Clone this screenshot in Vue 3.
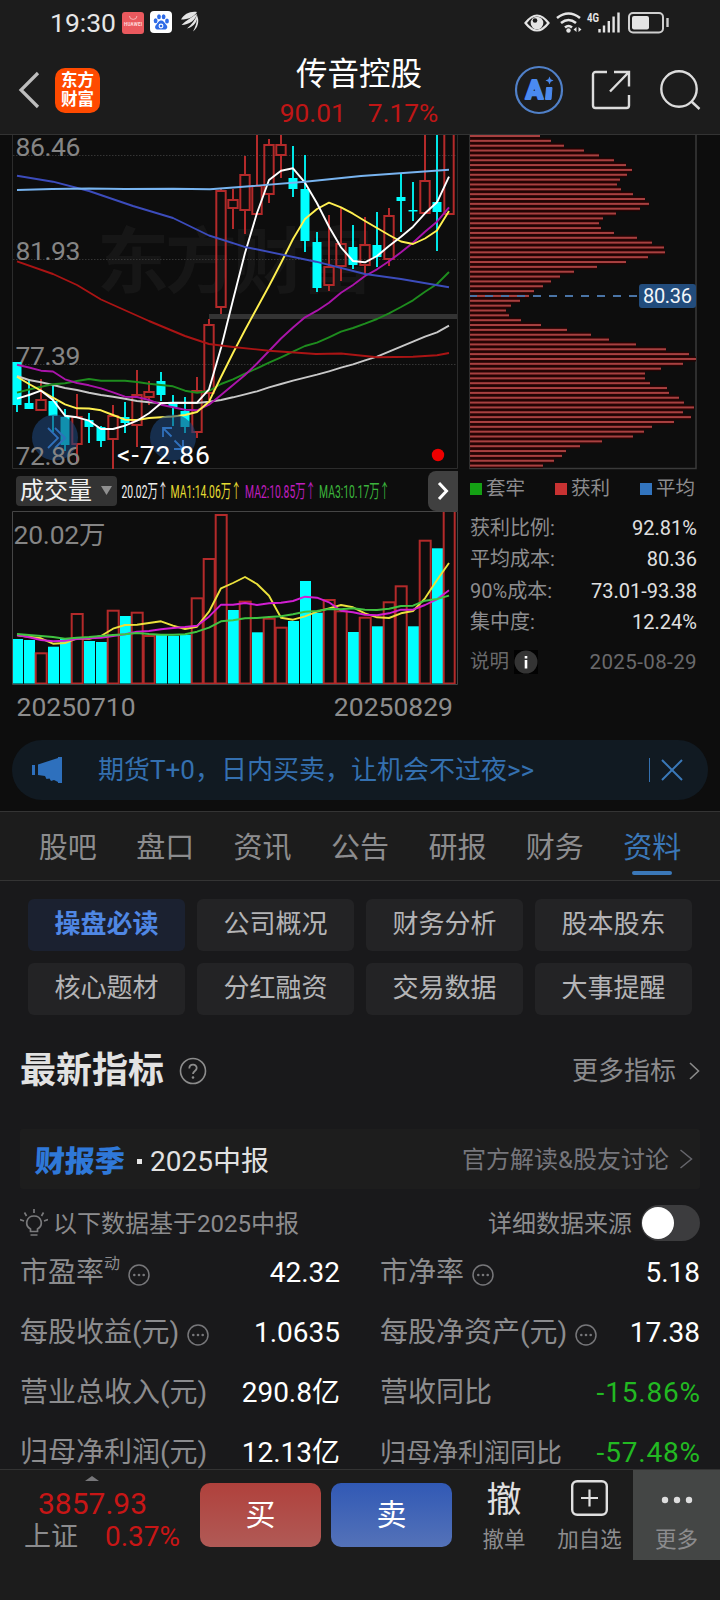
<template>
  <div class="app">
    <div class="status">
      <span class="clock">19:30</span>
      <svg class="st-left" width="78" height="24" viewBox="0 0 78 24">
        <rect x="0" y="1" width="22" height="22" rx="3" fill="#ea595e" />
        <path d="M7.5 5a3.7 3.4 0 0 0 7.4 0" fill="none" stroke="#f7b5b5" />
        <text x="2" y="14.6" font-size="4.6" font-weight="700" fill="#ffdcdc" textLength="18">HUAWEI</text>
        <rect x="28" y="0" width="22" height="22" rx="4" fill="#fff" />
        <g fill="#2f6be6">
          <ellipse cx="33.6" cy="9.8" rx="1.9" ry="2.5" />
          <ellipse cx="37" cy="5.8" rx="1.9" ry="2.5" />
          <ellipse cx="41.6" cy="5.8" rx="1.9" ry="2.5" />
          <ellipse cx="45" cy="10" rx="1.9" ry="2.5" />
          <path d="M39.2 9.5c2.8 0 3.2 2.5 5 4.3 2 2 1 4.8-1.5 4.8h-7c-2.6 0-3.5-2.8-1.5-4.8 1.8-1.8 2.2-4.3 5-4.3z" />
        </g>
        <circle cx="39" cy="15" r="1.9" fill="none" stroke="#fff" stroke-width="1.1" />
        <g fill="#e4e4e4">
          <path d="M59 8.500C62 3 68 0 75 1c-3 5-9 7.500-16 7.500z" />
          <path d="M59.500 14C64 9.500 70 6.500 75 2.500c-1 6.500-8 11.500-15.500 11.500z" />
          <path d="M65 17.500c4.500-4 8-8 10-14 1.500 6-3 12.500-10 14z" />
          <path d="M71 20.500c2.500-4.500 4-9 4.300-15.500 2.200 5 .700 12-4.300 15.500z" />
        </g>
      </svg>
      <svg class="st-right" width="148" height="26" viewBox="0 0 148 26">
        <path d="M1.5 13Q13-2 24.5 13 13 28 1.5 13z" fill="none" stroke="#e4e4e4" stroke-width="2.2" />
        <circle cx="13" cy="13" r="6.3" fill="#e4e4e4" />
        <circle cx="11" cy="10.500" r="2.3" fill="#1c1c1c" />
        <g fill="none" stroke="#e4e4e4" stroke-width="2.6">
          <path d="M33 8q11.500-9 23 0M37 13q7.500-6 15 0M41 17.500q3.500-3 7 0" />
        </g>
        <circle cx="44.5" cy="20.5" r="2.2" fill="#e4e4e4" />
        <path d="M52.500 17v5l-3-2.500zM54.500 17v5l3-2.500z" fill="#e4e4e4" />
        <text x="63" y="11.5" font-size="12" font-weight="700" fill="#e4e4e4" textLength="12" lengthAdjust="spacingAndGlyphs">4G</text>
        <path d="M75.500 19v3.500M80 15.500v7M84.800 11v11.500M89.600 6.500v16M94.500 2.500v20" stroke="#e4e4e4" stroke-width="2.4" />
        <rect x="105" y="3" width="34" height="19.5" rx="4" fill="none" stroke="#cfcfcf" stroke-width="2" />
        <rect x="108" y="6" width="17" height="13.5" rx="2" fill="#e4e4e4" />
        <path d="M143.500 8v9" stroke="#cfcfcf" stroke-width="2.4" />
      </svg>
    </div>

    <header class="header">
      <div class="head-left">
        <svg width="22" height="38" viewBox="0 0 22 38"><path d="M20 2 3 19l17 17" fill="none" stroke="#bdbdbd" stroke-width="3.2" /></svg>
        <div class="logo"><span>东方</span><span>财富</span></div>
      </div>
      <div class="head-mid">
        <div class="title">传音控股</div>
        <div class="quote"><span>90.01</span><span>7.17%</span></div>
      </div>
      <svg class="head-right" width="190" height="50" viewBox="0 0 190 50">
        <circle cx="26" cy="25" r="23" fill="none" stroke="#5080c8" stroke-width="2.2" />
        <text x="12.5" y="34" font-size="26" font-weight="900" fill="#4a8af0" stroke="#4a8af0" stroke-width="1.8" stroke-linejoin="round">A</text>
        <path d="M33.500 22.500h5.500l-1 12h-5.500z" fill="#4a8af0" stroke="#4a8af0" stroke-linejoin="round" />
        <path d="M36.500 11.500l1.200 2.800 2.800 1.200-2.800 1.200-1.200 2.800-1.200-2.800-2.800-1.200 2.800-1.200z" fill="#4a8af0" />
        <g fill="none" stroke="#dcdcdc" stroke-width="2.4">
          <path d="M94 7H82.500a2.500 2.500 0 0 0-2.500 2.500v31a2.500 2.500 0 0 0 2.500 2.500h31a2.500 2.500 0 0 0 2.500-2.500V30M101 7h15v14.500M115.500 7.500 97 26.500" />
          <circle cx="166" cy="24" r="17.7" />
          <path d="m178.500 36.500 8 7.500" />
        </g>
      </svg>
    </header>

    <section class="market">
      <div class="market-cols">
        <div class="col-left">
          <svg class="kline" width="458" height="335" viewBox="0 135 458 335">
            <g class="mark">
              <text x="97" y="287" textLength="276">东方财富</text>
            </g>
            <path d="M12.500 135V468.500H457.500V135" fill="none" stroke="#2c2c2c" />
            <path d="M13 155.500H457M13 259.500H457M13 364.500H457" stroke="#353535" stroke-dasharray="1.5 1.5" />
            <rect x="209" y="314" width="248" height="5" fill="#333" />
            <g class="y-label">
              <text x="15.5" y="156" textLength="65">86.46</text>
              <text x="15.5" y="260" textLength="65">81.93</text>
              <text x="15.5" y="364.5" textLength="65">77.39</text>
            </g>
            <g v-for="(c, i) in candles" :key="i">
              <template v-if="c[0]">
                <path :d="`M${cx(i)} ${c[1]}V${c[3]}M${cx(i)} ${c[4]}V${c[2]}`" stroke="#b32a2a" stroke-width="2" />
                <rect :x="cx(i) - 4.7" :y="c[3]" width="9.4" :height="c[4] - c[3]" fill="none" stroke="#b32a2a" stroke-width="2" />
              </template>
              <template v-else>
                <path :d="`M${cx(i)} ${c[1]}V${c[2]}`" stroke="#00e6e6" stroke-width="2" />
                <rect :x="cx(i) - 4.5" :y="c[3]" width="9" :height="c[4] - c[3]" fill="#00ffff" />
              </template>
            </g>
            <g fill="none" stroke-width="1.9" stroke-linejoin="round">
              <polyline v-for="l in maLines" :key="l.color" :points="pts(l.values)" :stroke="l.color" />
              <polyline points="17,261.3 53,274 77,285 101,299.5 149,321 185,336 209,344 233,347 269,350.7 316,354 341,353.5 377,357.3 413,356.7 437,355.3 449,353" stroke="#aa1414" />
              <polyline points="17,175.7 53,181.7 89,191 133,206 173,218 209,235.5 244,246.7 316,261.7 365,274 401,279 449,287.3" stroke="#3c4cbc" />
              <polyline points="17,190 52,189 89,188.5 125,189 173,188.7 210,189.3 240,187 305,181.7 361,176 449,169.7" stroke="#78b4f0" />
            </g>
            <g fill="#1c4478" fill-opacity=".6">
              <circle cx="55" cy="437.5" r="23" />
              <circle cx="173" cy="437.5" r="23" />
            </g>
            <path d="m48 428 10 10-10 10M55 428l10 10-10 10" fill="none" stroke="#3070bb" stroke-width="1.8" />
            <path d="M163 437v-9h9M163 428l8.500 8.500M183 440v9h-9M183 449l-8.500-8.500" fill="none" stroke="#3070bb" stroke-width="1.8" />
            <text class="y-label" x="15.5" y="465" textLength="65">72.86</text>
            <text class="low" x="117" y="464" textLength="93">&lt;-72.86</text>
            <circle cx="438" cy="455" r="6.2" fill="#ee0000" />
          </svg>

          <div class="vol-bar">
            <div class="vol-select">
              成交量
              <svg width="11" height="9" viewBox="0 0 11 9"><path d="M0 0h11L5.500 9z" fill="#909090" /></svg>
            </div>
            <svg class="vol-ma" width="310" height="30" viewBox="118 475 310 30">
              <text v-for="m in volMa" :key="m.text" :transform="`translate(${m.x} 496.5) scale(.545 1)`" :fill="m.color">{{ m.text }}</text>
            </svg>
            <button type="button" class="vol-next">
              <svg width="12" height="20" viewBox="0 0 12 20"><path d="m2 2 7.500 8L2 18" fill="none" stroke="#fff" stroke-width="3" /></svg>
            </button>
          </div>

          <svg class="volume" width="458" height="175" viewBox="0 511 458 175">
            <g v-for="(v, i) in volumes" :key="i">
              <rect v-if="!volDown.includes(i)" :x="cx(i) - 5.3" :y="v" width="11" :height="683.5 - v" fill="none" stroke="#b32a2a" stroke-width="2" />
              <rect v-else :x="cx(i) - 5" :y="v" width="11" :height="683.5 - v" fill="#00ffff" />
            </g>
            <path d="M12.500 511.500H457.500V684.500H12.500z" fill="none" stroke="#454545" />
            <g fill="none" stroke-width="1.9" stroke-linejoin="round">
              <polyline v-for="l in volLines" :key="l.color" :points="pts(l.values)" :stroke="l.color" />
            </g>
            <text class="y-label" x="13.5" y="543.5" textLength="92">20.02万</text>
          </svg>
          <div class="dates"><span>20250710</span><span>20250829</span></div>
        </div>

        <div class="col-right">
          <svg class="chips" width="240" height="335" viewBox="460 135 240 335">
            <rect x="470" y="130" width="226" height="338.5" fill="none" stroke="#3a3a3a" stroke-width="1.5" />
            <g v-for="(w, i) in chips" :key="i">
              <rect x="470" :y="133.6 + i * 4.847" :width="w" height="4.85" fill="#260404" />
              <rect x="470" :y="135 + i * 4.847" :width="w" height="2" fill="#a84040" />
            </g>
            <path d="M470 296H640" stroke="#4a74a6" stroke-width="2" stroke-dasharray="8 8" stroke-dashoffset="1" />
            <rect x="639" y="284" width="57" height="24" rx="3" fill="#224c7c" />
            <text x="643" y="302.5" font-size="20" fill="#f2f6fa" textLength="49">80.36</text>
          </svg>
          <div class="legend">
            <span v-for="g in legend" :key="g.name"><i :class="g.cls" />{{ g.name }}</span>
          </div>
          <div v-for="s in stats" :key="s[0]" class="stat">
            <span>{{ s[0] }}</span><b>{{ s[1] }}</b>
          </div>
          <div class="note">
            <span>说明</span>
            <svg width="24" height="24" viewBox="0 0 24 24">
              <rect width="24" height="24" fill="#020202" />
              <circle cx="12" cy="12" r="11.5" fill="#343434" />
              <path d="M12 6v2.500M12 10v8.500" stroke="#fff" stroke-width="2.6" />
            </svg>
            <span class="note-date">2025-08-29</span>
          </div>
        </div>
      </div>

      <div class="banner">
        <svg width="32" height="28" viewBox="0 0 32 28"><path d="M0 9h3v10H0zM6 8.500 26 2V1h4v26h-4v-1l-4-2-3 1-1.500-2.500-3 .500-1.500-3L6 19z" fill="#2e70bd" /></svg>
        <span class="banner-text">期货T+0，日内买卖，让机会不过夜&gt;&gt;</span>
        <i class="banner-line" />
        <svg width="22" height="22" viewBox="0 0 22 22"><path d="m1 1 20 20M21 1 1 21" stroke="#3a78b8" stroke-width="2" /></svg>
      </div>
    </section>

    <nav class="tabs">
      <span v-for="t in tabs" :key="t" :class="{ on: t === '资料' }">{{ t }}</span>
    </nav>

    <main class="content">
      <div class="chips-nav">
        <button v-for="(m, i) in menus" :key="m" type="button" :class="{ on: i === 0 }">{{ m }}</button>
      </div>

      <div class="heading">
        <h2>最新指标</h2>
        <svg width="28" height="28" viewBox="0 0 28 28">
          <circle cx="14" cy="14" r="12.5" fill="none" stroke="#8c8c8c" stroke-width="1.6" />
          <path d="M10.300 11.500c0-5 7.400-5 7.400-.500 0 3-3.700 3-3.700 6" fill="none" stroke="#8c8c8c" stroke-width="1.8" />
          <circle cx="14" cy="20.5" r="1.3" fill="#8c8c8c" />
        </svg>
        <span class="more">更多指标</span>
        <svg width="12" height="18" viewBox="0 0 12 18"><path d="m2 1 8.500 8L2 17" fill="none" stroke="#8a8a8a" stroke-width="1.6" /></svg>
      </div>

      <div class="season">
        <span class="season-tag">财报季</span>
        <i class="season-dot" />
        <span class="season-name">2025中报</span>
        <span class="season-link">官方解读&amp;股友讨论</span>
        <svg width="14" height="20" viewBox="0 0 14 20"><path d="m1.500 1 11 9-11 9" fill="none" stroke="#66666c" stroke-width="1.5" /></svg>
      </div>

      <div class="source">
        <svg width="28" height="28" viewBox="0 0 28 28" fill="none" stroke="#7a7a7c" stroke-width="1.7">
          <path d="M10.500 22.500v-2.500c-6.500-4-4-13 3.500-13s10 9 3.500 13v2.500zM10.500 26h7M14 0v4M4.500 3.500l2 3.500M23.500 3.500l-2 3.500M0 10.500l4 1.500M28 10.500l-4 1.500" />
        </svg>
        <span>以下数据基于2025中报</span>
        <span class="source-label">详细数据来源</span>
        <i class="toggle" />
      </div>

      <div class="metrics">
        <div v-for="m in metrics" :key="m.name" class="metric">
          <span class="m-name" :class="{ small: m.small }">{{ m.name }}<sup v-if="m.sup">{{ m.sup }}</sup></span>
          <svg v-if="m.tip" class="tip" width="22" height="22" viewBox="0 0 22 22">
            <circle cx="11" cy="11" r="10" fill="none" stroke="#77777a" stroke-width="1.5" />
            <g fill="#77777a"><circle cx="6.300" cy="11" r="1.3" /><circle cx="11" cy="11" r="1.3" /><circle cx="15.7" cy="11" r="1.3" /></g>
          </svg>
          <span class="m-val" :class="{ down: m.value.startsWith('-') }">{{ m.value }}</span>
        </div>
      </div>
    </main>

    <footer class="bottom">
      <div class="index">
        <svg width="14" height="5" viewBox="0 0 14 5"><path d="M0 5 7 0l7 5z" fill="#77777a" /></svg>
        <div class="index-val">3857.93</div>
        <div class="index-row"><span>上证</span><b>0.37%</b></div>
      </div>
      <button type="button" class="trade buy">买</button>
      <button type="button" class="trade sell">卖</button>
      <div class="act act-cancel"><span class="glyph">撤</span><span>撤单</span></div>
      <div class="act act-add">
        <svg width="38" height="36" viewBox="0 0 38 36" fill="none" stroke="#e0e0e0">
          <rect x="1.2" y="1.2" width="34.6" height="33.6" rx="5" stroke-width="2.4" />
          <path d="M18.500 9.500v17M10 18h17" stroke-width="2.2" />
        </svg>
        <span>加自选</span>
      </div>
      <div class="act act-more">
        <svg width="36" height="36" viewBox="0 0 36 36" fill="#dedede"><circle cx="6" cy="20" r="3.2" /><circle cx="18" cy="20" r="3.2" /><circle cx="30" cy="20" r="3.2" /></svg>
        <span>更多</span>
      </div>
    </footer>
  </div>
</template>

<script setup>
// [alcista, máximo, mínimo, techo del cuerpo, base del cuerpo]
const candles = [
  [0, 362, 412, 362, 405], [0, 379, 409, 403, 409], [1, 379, 410, 400, 410], [0, 385, 432, 401, 416],
  [0, 409, 451, 417, 445], [1, 394, 463, 417, 444], [0, 413, 443, 420, 427], [0, 426, 447, 427, 441],
  [1, 405, 469, 416, 439], [0, 402, 433, 417, 423], [1, 370, 447, 395, 425], [1, 381, 405, 392, 397],
  [0, 372, 401, 381, 395], [0, 395, 426, 403, 407], [0, 397, 433, 411, 427], [1, 377, 438, 391, 432],
  [1, 319, 400, 325, 393], [1, 188, 314, 191, 307], [1, 189, 229, 200, 208], [1, 156, 234, 175, 210],
  [1, 130, 214, 186, 214], [1, 139, 203, 145, 194], [1, 133, 178, 145, 155], [0, 146, 197, 178, 189],
  [0, 155, 252, 189, 241], [0, 232, 292, 242, 288], [1, 215, 291, 267, 285], [1, 207, 281, 244, 266],
  [0, 225, 269, 247, 265], [1, 217, 274, 245, 265], [0, 212, 267, 245, 257], [1, 208, 266, 216, 259],
  [0, 173, 232, 197, 201], [0, 182, 221, 210, 211.5], [1, 130, 213, 181, 213], [0, 130, 251, 202, 212],
  [1, 110, 215, 120, 214],
]

const maLines = [
  { color: '#c8c8c8', values: [376, 380, 382.3, 385, 388, 390, 392.7, 395, 396.7, 398.7, 401, 402.3, 403, 403, 403, 403, 401.7, 400, 397.3, 394.3, 391.3, 387.3, 384, 380.7, 377.7, 374.7, 371.3, 367.7, 364.3, 360.3, 356.7, 351.7, 346.7, 341.7, 336.7, 332.3, 325.7] },
  { color: '#1e8c1e', values: [392.7, 389.5, 386.7, 384.2, 383.3, 381, 379, 380.7, 380.7, 380.7, 382, 383.7, 385, 386.3, 390.7, 392.7, 391, 384, 379.3, 373.7, 368.3, 362.7, 357.3, 351.7, 346, 342.7, 337.3, 331.7, 328, 323.7, 319, 313.3, 307, 300.3, 291.7, 284, 272] },
  { color: '#aa14aa', values: [364.7, 367.5, 370.7, 371.5, 379.3, 383, 385.3, 388.3, 392.3, 396.7, 397, 400, 404.7, 407.3, 409.7, 410.3, 404.7, 395, 385, 375, 363.5, 351, 338.5, 327.5, 317.3, 310.7, 302.7, 292.7, 285, 276, 269.3, 261.3, 252.3, 242.7, 231.7, 221.7, 207.3] },
  { color: '#fff050', values: [376.7, 384, 390.7, 397.7, 404.3, 408.3, 408.5, 410.3, 415, 419.7, 420, 418, 417.3, 416.5, 415, 412, 401.7, 377, 353, 330, 308, 286, 263, 239, 219, 209, 202.7, 207.3, 213.7, 221, 228, 235, 241.5, 244, 238.5, 230.5, 211] },
  { color: '#ffffff', values: [398.7, 395, 390.7, 400, 415.7, 417.3, 420.7, 429, 429, 425.7, 420.7, 413.3, 403.3, 402.7, 402.7, 402.7, 389.3, 348, 300, 253, 213, 180, 170.7, 168.3, 182.7, 203.3, 226.7, 247.3, 261, 262.3, 256, 246, 236.7, 226.7, 213.3, 202.3, 176.7] },
]

const volumes = [
  639, 640, 653.3, 646.7, 639, 614, 641, 642, 610.7, 616, 612.7, 636, 635, 635.7, 634.7, 598.3, 559, 515, 610,
  601.7, 632.3, 618.7, 627.7, 621, 581, 612.7, 600, 611.3, 632, 617.7, 626.3, 602.3, 586.3, 626.3, 540.7, 548.3, 500,
]
const volDown = [0, 1, 3, 4, 6, 7, 9, 12, 13, 14, 18, 20, 23, 24, 25, 28, 30, 33, 35]

const volMa = [
  { text: '20.02万↑', x: 121.5, color: '#f0f0f0' },
  { text: 'MA1:14.06万↑', x: 170.5, color: '#e6dc32' },
  { text: 'MA2:10.85万↑', x: 245, color: '#be1ebe' },
  { text: 'MA3:10.17万↑', x: 319, color: '#3cb43c' },
]

const volLines = [
  { color: '#ebe13c', values: [635.3, 636.7, 638.3, 643.7, 643, 638.3, 638.7, 636, 628.7, 625, 624.7, 623, 621.3, 625.7, 629, 626.7, 611.7, 588.3, 583, 577, 584, 595.7, 617.7, 619.7, 616.3, 611.7, 608.3, 605, 607.3, 613.3, 617.3, 618, 613.3, 611, 598.3, 580, 563] },
  { color: '#d21ed2', values: [635, 637.3, 640, 641.3, 640.7, 639, 638.3, 637.7, 636, 634.3, 631.7, 631, 629.3, 628, 627, 625.7, 616.7, 604.7, 604.7, 603, 605, 603.3, 602.7, 601, 596.7, 597.7, 602.3, 610.7, 612.3, 614.7, 615.3, 613.3, 609.7, 609.7, 605, 599.3, 590.3] },
  { color: '#41c341', values: [634, 635, 636, 637, 638.7, 637.7, 637, 636, 635, 634.3, 633, 634, 634.7, 634.7, 634.3, 631.7, 627.7, 621.3, 620.3, 618.3, 618, 617, 616.3, 614.3, 611.7, 611, 609, 609.3, 608.3, 609.7, 610, 608.7, 606, 605.7, 600.7, 599, 595.7] },
]

// distribución de costes, de precio alto a bajo
const chips = [
  70, 81, 94, 114, 129, 144, 156, 162, 157, 150, 147, 151, 163, 175, 179, 170, 146, 133, 129, 131, 144, 167, 182,
  194, 195, 178, 156, 127, 104, 90, 81, 73, 64, 59, 50, 41, 36, 39, 51, 71, 97, 121, 139, 166, 196, 219, 226, 213,
  191, 175, 175, 180, 197, 199, 209, 214, 224, 213, 221, 204, 182, 174, 163, 132, 110, 96, 92, 84, 73,
]

const legend = [
  { name: '套牢', cls: 'green' },
  { name: '获利', cls: 'red' },
  { name: '平均', cls: 'blue' },
]
const stats = [
  ['获利比例:', '92.81%'],
  ['平均成本:', '80.36'],
  ['90%成本:', '73.01-93.38'],
  ['集中度:', '12.24%'],
]
const tabs = ['股吧', '盘口', '资讯', '公告', '研报', '财务', '资料']
const menus = ['操盘必读', '公司概况', '财务分析', '股本股东', '核心题材', '分红融资', '交易数据', '大事提醒']
const metrics = [
  { name: '市盈率', sup: '动', tip: true, value: '42.32' },
  { name: '市净率', tip: true, value: '5.18' },
  { name: '每股收益(元)', tip: true, value: '1.0635' },
  { name: '每股净资产(元)', tip: true, value: '17.38' },
  { name: '营业总收入(元)', value: '290.8亿' },
  { name: '营收同比', value: '-15.86%' },
  { name: '归母净利润(元)', value: '12.13亿' },
  { name: '归母净利润同比', small: true, value: '-57.48%' },
]

const cx = (i) => 17 + i * 12
const pts = (values) => values.map((y, i) => `${cx(i)},${y}`).join(' ')
</script>

<style>
body {
  margin: 0;
  background: #1c1c1c;
}
</style>

<style scoped>
.app {
  width: 720px;
  height: 1600px;
  overflow: hidden;
  background: #1c1c1c;
  color: #8c8c8e;
  font-family: Roboto, 'Noto Sans CJK SC', sans-serif;
}
.app svg {
  flex: none;
  display: block;
}
button {
  border: none;
  padding: 0;
  font-family: inherit;
}

/* Barra de estado */
.status {
  display: flex;
  align-items: center;
  height: 46px;
  padding: 0 48px 0 50px;
}
.clock {
  width: 72px;
  font-size: 26.5px;
  line-height: 46px;
  color: #e6e6e6;
}
.st-right {
  margin-left: auto;
}

/* Cabecera */
.header {
  display: flex;
  align-items: center;
  box-sizing: border-box;
  height: 89px;
  padding: 0 17px 0 18px;
  border-bottom: 1px solid #333;
}
.head-left {
  display: flex;
  align-items: center;
  gap: 15px;
  width: 220px;
}
.logo {
  display: flex;
  flex-direction: column;
  justify-content: center;
  align-items: center;
  width: 45px;
  height: 45px;
  border-radius: 10px;
  background: #ff4a00;
  color: #fff;
  font-size: 16.5px;
  font-weight: 700;
  line-height: 19px;
}
.head-mid {
  flex: 1;
  padding-top: 4px;
  margin-right: 33px;
  text-align: center;
}
.title {
  font-size: 31.5px;
  line-height: 42px;
  color: #fff;
}
.quote {
  display: flex;
  justify-content: center;
  gap: 22px;
  font-size: 26.3px;
  line-height: 34px;
  color: #c01616;
}

/* Gráficos */
.market {
  box-sizing: border-box;
  height: 676px;
  background: #0d0d0d;
}
.market-cols {
  display: flex;
  height: 605px;
}
.col-left {
  width: 460px;
}
.mark {
  font-size: 72px;
  font-weight: 700;
  fill: #161616;
}
.y-label {
  font-size: 26.5px;
  fill: #858585;
}
.low {
  font-size: 26.5px;
  fill: #fff;
}
.vol-bar {
  display: flex;
  align-items: center;
  height: 41px;
  padding-left: 16px;
  width: 442px;
}
.vol-select {
  display: flex;
  align-items: center;
  gap: 9px;
  box-sizing: border-box;
  width: 101px;
  height: 30px;
  padding-left: 4px;
  margin-right: 1px;
  border-radius: 4px;
  background: #333;
  color: #f0f0f0;
  font-size: 24px;
  line-height: 28px;
}
.vol-ma {
  font-size: 19px;
}
.vol-next {
  display: flex;
  align-items: center;
  justify-content: center;
  width: 30px;
  height: 40px;
  border-radius: 8px 0 0 8px;
  background: #404040;
}
.dates {
  display: flex;
  justify-content: space-between;
  padding: 2px 7px 0 16.5px;
  font-size: 26.5px;
  line-height: 38px;
  color: #8c8c8c;
}
.col-right {
  width: 260px;
}
.legend {
  display: flex;
  justify-content: space-between;
  height: 38px;
  padding: 0 25px 0 10px;
  font-size: 19.5px;
  line-height: 38px;
}
.legend span {
  display: flex;
  align-items: center;
}
.legend i {
  width: 12px;
  height: 12px;
  margin-right: 4px;
}
.green {
  background: #14a014;
}
.red {
  background: #c83232;
}
.blue {
  background: #3274be;
}
.stat {
  display: flex;
  justify-content: space-between;
  height: 31.3px;
  padding: 0 23px 0 10px;
  font-size: 20px;
  line-height: 40px;
}
.stat b {
  font-weight: 400;
  color: #e0e0e0;
}
.note {
  display: flex;
  align-items: center;
  gap: 5px;
  padding: 9px 23px 0 10px;
  font-size: 19.5px;
  line-height: 40px;
  color: #69696b;
}
.note-date {
  margin-left: auto;
  font-size: 20.5px;
  letter-spacing: 0.4px;
}
.banner {
  display: flex;
  align-items: center;
  box-sizing: border-box;
  height: 60px;
  margin: 0 12px;
  padding: 0 25px 0 20px;
  border-radius: 30px;
  background: #111a22;
  color: #3470b0;
}
.banner-text {
  margin-left: 34px;
  font-size: 26px;
  line-height: 60px;
}
.banner-line {
  width: 1px;
  height: 24px;
  margin: 0 11px 0 auto;
  background: #3470b0;
}

/* Pestañas */
.tabs {
  display: flex;
  box-sizing: border-box;
  height: 70px;
  padding: 0 19px;
  border-top: 1px solid #343434;
  border-bottom: 1px solid #343434;
}
.tabs span {
  position: relative;
  flex: 1;
  text-align: center;
  font-size: 29px;
  line-height: 72px;
}
.tabs .on {
  color: #3b78b8;
}
.tabs .on::after {
  content: '';
  position: absolute;
  left: 50%;
  bottom: 5px;
  width: 40px;
  height: 4px;
  margin-left: -20px;
  border-radius: 2px;
  background: #3b78b8;
}

/* Contenido */
.content {
  box-sizing: border-box;
  height: 588px;
  padding: 18px 20px 0;
  overflow: hidden;
  background: #19191b;
}
.chips-nav {
  display: grid;
  grid-template-columns: repeat(4, 1fr);
  gap: 12px;
  padding: 0 8px;
}
.chips-nav button {
  height: 52px;
  padding-bottom: 2px;
  border-radius: 6px;
  background: #232325;
  color: #b4b4b6;
  font-size: 26px;
  line-height: 50px;
}
.chips-nav .on {
  background: #1b2130;
  color: #4f87e4;
  font-weight: 700;
}
.heading {
  display: flex;
  align-items: center;
  height: 110px;
}
.heading h2 {
  margin: 2px 15px 0 0;
  font-size: 36px;
  line-height: 60px;
  color: #e2e2e2;
}
.heading svg {
  margin-top: 1px;
}
.more {
  margin: 0 12px 4px auto;
  font-size: 26px;
}
.season {
  display: flex;
  align-items: center;
  box-sizing: border-box;
  height: 60px;
  margin-top: 4px;
  padding: 0 7px 0 15px;
  border-radius: 3px;
  background: #1d1d1d;
}
.season-tag {
  font-size: 30px;
  font-weight: 900;
  color: #2f78d8;
  transform: skewX(-3deg);
}
.season-dot {
  width: 5px;
  height: 5px;
  margin: 4px 8px 0 12px;
  background: #e6e6e6;
}
.season-name {
  font-size: 28px;
  color: #e2e2e2;
}
.season-link {
  margin: 0 10px 4px auto;
  font-size: 24px;
  color: #76767c;
}
.source {
  display: flex;
  align-items: center;
  height: 36px;
  padding: 16px 0 18px;
  font-size: 24px;
}
.source span {
  margin: 0 0 4px 5px;
}
.source .source-label {
  margin: 0 9px 4px auto;
}
.toggle {
  box-sizing: border-box;
  width: 59px;
  height: 36px;
  padding: 2px 1px;
  border-radius: 18px;
  background: #3c3c3e;
}
.toggle::before {
  content: '';
  display: block;
  width: 32px;
  height: 32px;
  border-radius: 50%;
  background: #fff;
}
.metrics {
  display: grid;
  grid-template-columns: 320px 320px;
  column-gap: 40px;
  margin-top: -16px;
}
.metric {
  display: flex;
  align-items: center;
  height: 60px;
  line-height: 60px;
}
.m-name {
  font-size: 28px;
}
.m-name.small {
  font-size: 26px;
}
.m-name sup {
  font-size: 16px;
  line-height: 0;
  vertical-align: 13px;
}
.tip {
  margin: 4px 0 0 8px;
}
.m-val {
  margin-left: auto;
  font-size: 28px;
  color: #fff;
}
.m-val.down {
  color: #22b922;
  letter-spacing: 0.8px;
  margin-right: -0.8px;
}

/* Barra inferior */
.bottom {
  display: flex;
  align-items: flex-start;
  box-sizing: border-box;
  height: 131px;
  border-top: 1px solid #333;
}
.index {
  width: 200px;
}
.index svg {
  margin: 6px 0 0 85px;
}
.index-val {
  padding-left: 38px;
  font-size: 30px;
  line-height: 45px;
  color: #c81616;
}
.index-row {
  display: flex;
  align-items: center;
  gap: 27px;
  padding-left: 24px;
  font-size: 27px;
  line-height: 22px;
}
.index-row b {
  font-size: 28px;
  font-weight: 400;
  color: #c81616;
}
.trade {
  width: 121px;
  height: 64px;
  margin: 13px 10px 0 0;
  border-radius: 10px;
  color: #fff;
  font-size: 30px;
  line-height: 64px;
}
.buy {
  background: linear-gradient(#b0413c, #b05a56);
}
.sell {
  background: linear-gradient(#3159b5, #5472b8);
}
.act {
  display: flex;
  flex-direction: column;
  align-items: center;
  box-sizing: border-box;
  height: 90px;
  padding-top: 10px;
  font-size: 21.5px;
  line-height: 48px;
}
.glyph {
  height: 36px;
  font-size: 35px;
  line-height: 42px;
  color: #e0e0e0;
}
.act-cancel {
  width: 84px;
}
.act-add {
  width: 87px;
}
.act-more {
  width: 87px;
  background: #444645;
}
</style>
